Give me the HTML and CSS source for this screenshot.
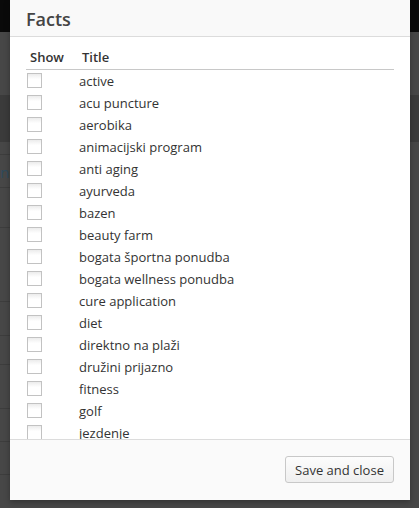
FILE: index.html
```html
<!DOCTYPE html>
<html>
<head>
<meta charset="utf-8">
<link rel="stylesheet" href="styles.css">
</head>
<body>
<div class="page">
  <div class="topbar"></div>
  <div class="band1"></div>
  <div class="band2"></div>
  <div class="content">
    <div class="line l1"></div>
    <div class="line l2"><span class="peek">tin</span></div>
    <div class="line l3"></div>
    <div class="line l4"></div>
    <div class="line l5"></div>
    <div class="line l6"></div>
    <div class="line l7"></div>
    <div class="line l8"></div>
    <div class="line l9"></div>
  </div>
</div>

<div class="modal">
  <div class="modal-header"><h3 class="modal-title">Facts</h3></div>
  <div class="modal-body">
    <table class="facts">
      <thead>
        <tr><th class="col-show">Show</th><th class="col-title">Title</th></tr>
      </thead>
      <tbody>
        <tr><td><span class="cb"></span></td><td>active</td></tr>
        <tr><td><span class="cb"></span></td><td>acu puncture</td></tr>
        <tr><td><span class="cb"></span></td><td>aerobika</td></tr>
        <tr><td><span class="cb"></span></td><td>animacijski program</td></tr>
        <tr><td><span class="cb"></span></td><td>anti aging</td></tr>
        <tr><td><span class="cb"></span></td><td>ayurveda</td></tr>
        <tr><td><span class="cb"></span></td><td>bazen</td></tr>
        <tr><td><span class="cb"></span></td><td>beauty farm</td></tr>
        <tr><td><span class="cb"></span></td><td>bogata športna ponudba</td></tr>
        <tr><td><span class="cb"></span></td><td>bogata wellness ponudba</td></tr>
        <tr><td><span class="cb"></span></td><td>cure application</td></tr>
        <tr><td><span class="cb"></span></td><td>diet</td></tr>
        <tr><td><span class="cb"></span></td><td>direktno na plaži</td></tr>
        <tr><td><span class="cb"></span></td><td>družini prijazno</td></tr>
        <tr><td><span class="cb"></span></td><td>fitness</td></tr>
        <tr><td><span class="cb"></span></td><td>golf</td></tr>
        <tr><td><span class="cb"></span></td><td>jezdenje</td></tr>
        <tr><td><span class="cb"></span></td><td>kolesarjenje</td></tr>
      </tbody>
    </table>
  </div>
  <div class="modal-footer">
    <button class="btn">Save and close</button>
  </div>
</div>
</body>
</html>
```

FILE: styles.css
```css
html, body {
  margin: 0;
  padding: 0;
  height: 100%;
  overflow: hidden;
}
body {
  background: #474747;
  font-family: "Open Sans", "DejaVu Sans", sans-serif;
}
.page {
  display: flex;
  flex-direction: column;
}
.topbar { height: 32px; background: #0a0a0a; }
.band1 { height: 63px; background: #474747; }
.band2 { height: 47px; background: #3b3b3b; }
.content {
  display: flex;
  flex-direction: column;
  width: 147px;
}
.line {
  border-bottom: 1px solid #3d3d3d;
  box-sizing: border-box;
}
.l1 { height: 13px; }
.l2 { height: 33px; position: relative; }
.l3 { height: 40px; }
.l4 { height: 74px; }
.l5 { height: 34px; }
.l6 { height: 29px; }
.l7 { height: 44px; }
.l8 { height: 33px; }
.l9 { height: 33px; }
.peek {
  position: absolute;
  left: -9px;
  top: 7px;
  font-size: 15px;
  color: #2e4a5c;
}

.modal {
  position: absolute;
  left: 10px;
  top: 0;
  width: 400px;
  height: 500px;
  background: #fff;
  display: flex;
  flex-direction: column;
  box-shadow: 0 2px 6px rgba(0,0,0,0.3);
}
.modal-header {
  height: 36px;
  flex: none;
  background: #f9f9f9;
  border-bottom: 1px solid #dcdcdc;
  padding: 0 16px;
  display: flex;
  align-items: center;
}
.modal-title {
  margin: 0;
  font-size: 18px;
  font-weight: 600;
  color: #444;
  line-height: 1;
  padding-top: 1px;
}
.modal-body {
  flex: 1;
  overflow: hidden;
  padding: 0 16px;
}
.facts {
  width: 100%;
  border-collapse: collapse;
  font-size: 13px;
  color: #333;
}
.facts th {
  text-align: left;
  font-weight: 600;
  height: 32px;
  padding: 8px 0 0 0;
  box-sizing: border-box;
  border-bottom: 1px solid #c8c8c8;
  vertical-align: middle;
  color: #333;
}
.facts th.col-show { width: 53px; padding-left: 4px; }
.facts th.col-title { padding-left: 3px; }
.facts td {
  height: 22px;
  padding: 0;
  vertical-align: middle;
  line-height: 22px;
}
.cb {
  display: block;
  width: 15px;
  height: 15px;
  box-sizing: border-box;
  margin-left: 1px;
  border: 1px solid #c2c2c2;
  background: linear-gradient(#ececec, #fff 40%);
}
.modal-footer {
  height: 60px;
  flex: none;
  background: #fafafa;
  border-top: 1px solid #dcdcdc;
  display: flex;
  justify-content: flex-end;
  align-items: center;
  padding: 0 16px;
}
.btn {
  font-family: "Open Sans", "DejaVu Sans", sans-serif;
  font-size: 13px;
  color: #333;
  height: 27px;
  width: 109px;
  padding: 0;
  border: 1px solid #c8c8c8;
  border-radius: 3px;
  background: linear-gradient(#fcfcfc, #efefef);
  margin-top: -1px;
}
```
